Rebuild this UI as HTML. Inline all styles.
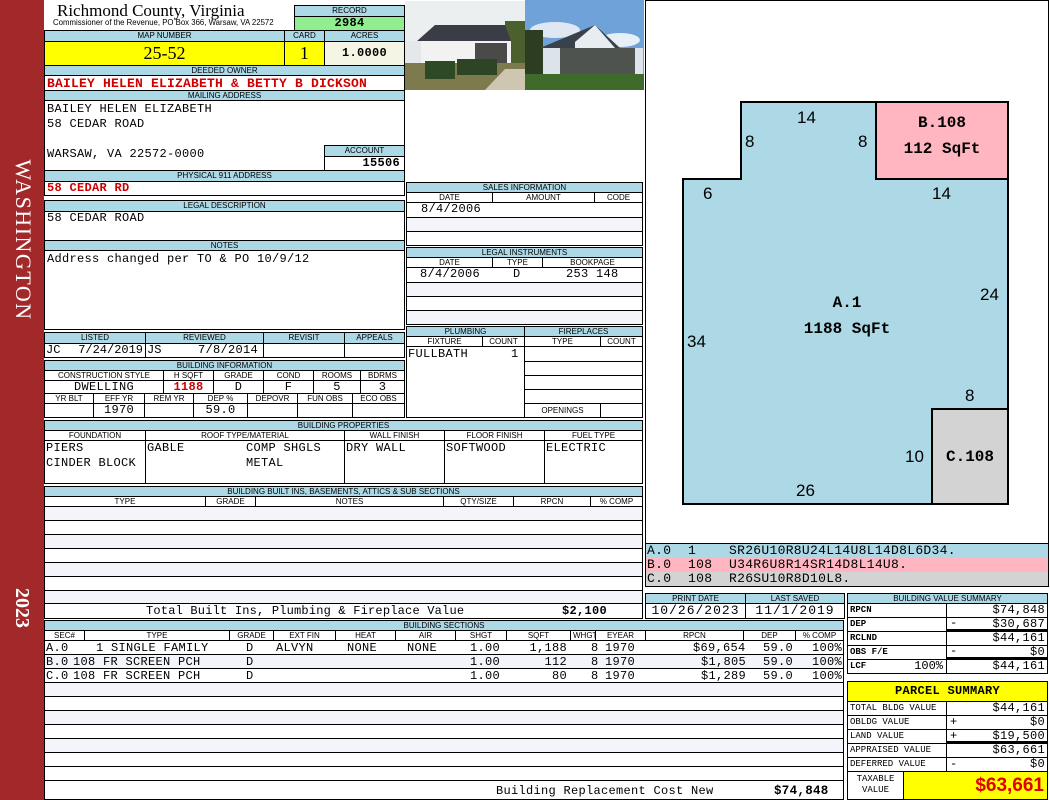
<!DOCTYPE html>
<html><head><meta charset="utf-8"><style>
*{margin:0;padding:0;box-sizing:border-box}
body{width:1050px;height:800px;position:relative;background:#fff;overflow:hidden;font-family:"Liberation Mono",monospace;font-size:12px;letter-spacing:0.3px;color:#000}
div{position:absolute}
.h{background:#add8e6;border:1px solid #000;font-family:"Liberation Sans",sans-serif;font-size:8px;letter-spacing:0;text-align:center;line-height:9px;white-space:nowrap;overflow:hidden}
.c{border:1px solid #000;background:#fff;white-space:nowrap;overflow:hidden;line-height:13px;padding:0 2px}
.t{font-family:"Liberation Sans",sans-serif;font-size:8px;letter-spacing:0;line-height:9px;text-align:center}
.s{background:#f4f5fa}
.r{text-align:right}.m{text-align:center}
.red{color:#d00000;font-weight:bold}
.sm{font-size:9px;letter-spacing:0}
.row span{position:absolute;top:0;line-height:14px;white-space:pre}
</style></head><body>
<div style="left:0;top:0;width:44px;height:800px;background:#a3282a"></div>
<div style="left:-64px;top:229px;width:174px;height:22px;color:#fff;font-family:'Liberation Serif',serif;font-size:22px;letter-spacing:1.5px;line-height:22px;transform:rotate(90deg);text-align:center">WASHINGTON</div>
<div style="left:1px;top:597px;width:42px;height:22px;color:#fff;font-family:'Liberation Serif',serif;font-weight:bold;font-size:20px;letter-spacing:0;line-height:22px;transform:rotate(90deg);text-align:center">2023</div>

<div style="left:57px;top:2px;font-family:'Liberation Serif',serif;font-size:17px;letter-spacing:0;line-height:18px">Richmond County, Virginia</div>
<div style="left:53px;top:19px;font-family:'Liberation Sans',sans-serif;font-size:7.8px;letter-spacing:0;line-height:8px">Commissioner of the Revenue, PO Box 366, Warsaw, VA 22572</div>
<div class="h" style="left:294px;top:5px;width:111px;height:12px;line-height:10px">RECORD</div>
<div class="c m" style="left:294px;top:16px;width:111px;height:15px;background:#90ee90;font-weight:bold;line-height:13px">2984</div>

<div class="h" style="left:44px;top:30px;width:241px;height:12px;line-height:10px">MAP NUMBER</div>
<div class="h" style="left:284px;top:30px;width:41px;height:12px;line-height:10px">CARD</div>
<div class="h" style="left:324px;top:30px;width:81px;height:12px;line-height:10px">ACRES</div>
<div class="c m" style="left:44px;top:41px;width:241px;height:25px;background:#ffff00;font-family:'Liberation Serif',serif;font-size:18px;letter-spacing:0;line-height:23px">25-52</div>
<div class="c m" style="left:284px;top:41px;width:41px;height:25px;background:#ffff00;font-family:'Liberation Serif',serif;font-size:18px;line-height:23px">1</div>
<div class="c m" style="left:324px;top:41px;width:81px;height:25px;background:#f5f5e6;font-weight:bold;font-size:12px;line-height:23px">1.0000</div>

<div class="h" style="left:44px;top:65px;width:361px;height:11px">DEEDED OWNER</div>
<div class="c red" style="left:44px;top:75px;width:361px;height:16px;font-size:13px;letter-spacing:0.2px;line-height:15px">BAILEY HELEN ELIZABETH &amp; BETTY B DICKSON</div>
<div class="h" style="left:44px;top:90px;width:361px;height:11px">MAILING ADDRESS</div>
<div class="c" style="left:44px;top:100px;width:361px;height:71px;line-height:15px;padding-top:1px">BAILEY HELEN ELIZABETH<br>58 CEDAR ROAD<br><br>WARSAW, VA 22572-0000</div>
<div class="h" style="left:324px;top:145px;width:81px;height:12px;line-height:10px">ACCOUNT</div>
<div class="c r" style="left:324px;top:156px;width:81px;height:15px;font-weight:bold;padding-right:4px">15506</div>
<div class="h" style="left:44px;top:170px;width:361px;height:12px;line-height:10px">PHYSICAL 911 ADDRESS</div>
<div class="c red" style="left:44px;top:181px;width:361px;height:15px">58 CEDAR RD</div>

<div class="h" style="left:44px;top:200px;width:361px;height:12px;line-height:10px">LEGAL DESCRIPTION</div>
<div class="c" style="left:44px;top:211px;width:361px;height:30px">58 CEDAR ROAD</div>
<div class="h" style="left:44px;top:240px;width:361px;height:11px">NOTES</div>
<div class="c" style="left:44px;top:250px;width:361px;height:80px;padding-top:2px">Address changed per TO &amp; PO 10/9/12</div>

<div class="h" style="left:44px;top:332px;width:102px;height:12px;line-height:10px">LISTED</div>
<div class="h" style="left:145px;top:332px;width:119px;height:12px;line-height:10px">REVIEWED</div>
<div class="h" style="left:263px;top:332px;width:82px;height:12px;line-height:10px">REVISIT</div>
<div class="h" style="left:344px;top:332px;width:61px;height:12px;line-height:10px">APPEALS</div>
<div class="c" style="left:44px;top:343px;width:102px;height:15px;padding:0 1px;letter-spacing:0">JC<span style="position:absolute;right:2px">7/24/2019</span></div>
<div class="c" style="left:145px;top:343px;width:119px;height:15px;padding:0 1px;letter-spacing:0">JS<span style="position:absolute;right:5px;letter-spacing:0.3px">7/8/2014</span></div>
<div class="c" style="left:263px;top:343px;width:82px;height:15px"></div>
<div class="c" style="left:344px;top:343px;width:61px;height:15px"></div>

<div class="h" style="left:44px;top:360px;width:361px;height:11px">BUILDING INFORMATION</div>
<div class="c t" style="left:44px;top:370px;width:120px;height:11px">CONSTRUCTION STYLE</div>
<div class="c t" style="left:163px;top:370px;width:51px;height:11px">H SQFT</div>
<div class="c t" style="left:213px;top:370px;width:51px;height:11px">GRADE</div>
<div class="c t" style="left:263px;top:370px;width:51px;height:11px">COND</div>
<div class="c t" style="left:313px;top:370px;width:48px;height:11px">ROOMS</div>
<div class="c t" style="left:360px;top:370px;width:45px;height:11px">BDRMS</div>
<div class="c m" style="left:44px;top:380px;width:120px;height:14px;line-height:12px">DWELLING</div>
<div class="c m red" style="left:163px;top:380px;width:51px;height:14px;line-height:12px">1188</div>
<div class="c m" style="left:213px;top:380px;width:51px;height:14px;line-height:12px">D</div>
<div class="c m" style="left:263px;top:380px;width:51px;height:14px;line-height:12px">F</div>
<div class="c m" style="left:313px;top:380px;width:48px;height:14px;line-height:12px">5</div>
<div class="c m" style="left:360px;top:380px;width:45px;height:14px;line-height:12px">3</div>
<div class="c t" style="left:44px;top:393px;width:50px;height:11px">YR BLT</div>
<div class="c t" style="left:93px;top:393px;width:52px;height:11px">EFF YR</div>
<div class="c t" style="left:144px;top:393px;width:50px;height:11px">REM YR</div>
<div class="c t" style="left:193px;top:393px;width:55px;height:11px">DEP %</div>
<div class="c t" style="left:247px;top:393px;width:51px;height:11px">DEPOVR</div>
<div class="c t" style="left:297px;top:393px;width:56px;height:11px">FUN OBS</div>
<div class="c t" style="left:352px;top:393px;width:53px;height:11px">ECO OBS</div>
<div class="c" style="left:44px;top:403px;width:50px;height:15px"></div>
<div class="c m" style="left:93px;top:403px;width:52px;height:15px">1970</div>
<div class="c" style="left:144px;top:403px;width:50px;height:15px"></div>
<div class="c m" style="left:193px;top:403px;width:55px;height:15px">59.0</div>
<div class="c" style="left:247px;top:403px;width:51px;height:15px"></div>
<div class="c" style="left:297px;top:403px;width:56px;height:15px"></div>
<div class="c" style="left:352px;top:403px;width:53px;height:15px"></div>

<!-- photos -->
<svg style="position:absolute;left:405px;top:1px" width="120" height="89" viewBox="0 0 120 89">
<rect width="120" height="89" fill="#e4e8ea"/><rect y="0" width="120" height="40" fill="#eceff0"/>
<rect x="100" y="20" width="20" height="45" fill="#4b5f2f"/>
<rect y="62" width="120" height="27" fill="#7d7a4e"/><polygon points="80,89 120,89 120,68 100,68" fill="#cfc6b2"/>
<polygon points="12,40 30,24 100,24 106,40" fill="#3a3d45"/>
<rect x="16" y="40" width="90" height="22" fill="#f2f2f2"/>
<rect x="70" y="42" width="32" height="20" fill="#4a4a48"/>
<rect x="20" y="60" width="30" height="18" fill="#2e4a25"/><rect x="52" y="58" width="40" height="16" fill="#2d4524"/>
</svg>
<svg style="position:absolute;left:525px;top:0" width="119" height="90" viewBox="0 0 119 90">
<rect width="119" height="90" fill="#6fa2d8"/><ellipse cx="30" cy="30" rx="25" ry="8" fill="#dfe8f2"/><ellipse cx="95" cy="40" rx="20" ry="7" fill="#e6eef6"/>
<rect x="0" y="30" width="18" height="50" fill="#2d3d22"/>
<polygon points="15,48 70,25 95,48" fill="#39424a"/>
<polygon points="50,42 70,25 90,48 50,48" fill="#e8edf2"/>
<rect x="18" y="48" width="100" height="30" fill="#dde3ea"/>
<rect x="35" y="48" width="75" height="28" fill="#4e5350"/>
<rect y="74" width="119" height="16" fill="#3e6a2a"/>
</svg>

<!-- sales -->
<div class="h" style="left:406px;top:182px;width:237px;height:11px">SALES INFORMATION</div>
<div class="c t" style="left:406px;top:192px;width:87px;height:11px">DATE</div>
<div class="c t" style="left:492px;top:192px;width:103px;height:11px">AMOUNT</div>
<div class="c t" style="left:594px;top:192px;width:49px;height:11px">CODE</div>
<div class="c" style="left:406px;top:202px;width:237px;height:16px;padding-left:14px">8/4/2006</div>
<div class="c s" style="left:406px;top:217px;width:237px;height:15px"></div>
<div class="c" style="left:406px;top:231px;width:237px;height:15px"></div>
<div class="h" style="left:406px;top:247px;width:237px;height:11px">LEGAL INSTRUMENTS</div>
<div class="c t" style="left:406px;top:257px;width:87px;height:11px">DATE</div>
<div class="c t" style="left:492px;top:257px;width:51px;height:11px">TYPE</div>
<div class="c t" style="left:542px;top:257px;width:101px;height:11px">BOOKPAGE</div>
<div class="c" style="left:406px;top:267px;width:237px;height:16px"></div>
<div style="left:420px;top:268px;line-height:13px">8/4/2006</div><div style="left:513px;top:268px;line-height:13px">D</div><div style="left:566px;top:268px;line-height:13px">253 148</div>
<div class="c s" style="left:406px;top:282px;width:237px;height:15px"></div>
<div class="c" style="left:406px;top:296px;width:237px;height:15px"></div>
<div class="c s" style="left:406px;top:310px;width:237px;height:15px"></div>

<!-- plumbing -->
<div class="h" style="left:406px;top:326px;width:119px;height:11px">PLUMBING</div>
<div class="h" style="left:524px;top:326px;width:119px;height:11px">FIREPLACES</div>
<div class="c t" style="left:406px;top:336px;width:77px;height:11px">FIXTURE</div>
<div class="c t" style="left:482px;top:336px;width:43px;height:11px">COUNT</div>
<div class="c t" style="left:524px;top:336px;width:77px;height:11px">TYPE</div>
<div class="c t" style="left:600px;top:336px;width:43px;height:11px">COUNT</div>
<div style="left:406px;top:346px;width:119px;height:72px;border:1px solid #000;border-top:none"></div>
<div style="left:408px;top:348px;line-height:13px">FULLBATH</div><div style="left:511px;top:348px;line-height:13px">1</div>
<div class="c" style="left:524px;top:346px;width:119px;height:16px"></div>
<div class="c" style="left:524px;top:361px;width:119px;height:15px"></div>
<div class="c" style="left:524px;top:375px;width:119px;height:15px"></div>
<div class="c" style="left:524px;top:389px;width:119px;height:15px"></div>
<div class="c t" style="left:524px;top:403px;width:77px;height:15px;line-height:13px">OPENINGS</div>
<div class="c" style="left:600px;top:403px;width:43px;height:15px"></div>

<!-- building properties -->
<div class="h" style="left:44px;top:420px;width:599px;height:11px">BUILDING PROPERTIES</div>
<div class="c t" style="left:44px;top:430px;width:102px;height:11px">FOUNDATION</div>
<div class="c t" style="left:145px;top:430px;width:200px;height:11px">ROOF TYPE/MATERIAL</div>
<div class="c t" style="left:344px;top:430px;width:101px;height:11px">WALL FINISH</div>
<div class="c t" style="left:444px;top:430px;width:101px;height:11px">FLOOR FINISH</div>
<div class="c t" style="left:544px;top:430px;width:99px;height:11px">FUEL TYPE</div>
<div class="c" style="left:44px;top:440px;width:102px;height:44px;line-height:15px;padding:0 1px">PIERS<br>CINDER BLOCK</div>
<div class="c" style="left:145px;top:440px;width:200px;height:44px;line-height:15px;padding:0 1px">GABLE</div>
<div style="left:246px;top:441px;line-height:15px">COMP SHGLS<br>METAL</div>
<div class="c" style="left:344px;top:440px;width:101px;height:44px;line-height:15px;padding:0 1px">DRY WALL</div>
<div class="c" style="left:444px;top:440px;width:101px;height:44px;line-height:15px;padding:0 1px">SOFTWOOD</div>
<div class="c" style="left:544px;top:440px;width:99px;height:44px;line-height:15px;padding:0 1px">ELECTRIC</div>

<!-- built ins -->
<div class="h" style="left:44px;top:486px;width:599px;height:11px">BUILDING BUILT INS, BASEMENTS, ATTICS &amp; SUB SECTIONS</div>
<div class="c t" style="left:44px;top:496px;width:162px;height:11px">TYPE</div>
<div class="c t" style="left:205px;top:496px;width:51px;height:11px">GRADE</div>
<div class="c t" style="left:255px;top:496px;width:189px;height:11px">NOTES</div>
<div class="c t" style="left:443px;top:496px;width:71px;height:11px">QTY/SIZE</div>
<div class="c t" style="left:513px;top:496px;width:78px;height:11px">RPCN</div>
<div class="c t" style="left:590px;top:496px;width:53px;height:11px">% COMP</div>
<div class="c s" style="left:44px;top:506px;width:599px;height:15px"></div>
<div class="c" style="left:44px;top:520px;width:599px;height:15px"></div>
<div class="c s" style="left:44px;top:534px;width:599px;height:15px"></div>
<div class="c" style="left:44px;top:548px;width:599px;height:15px"></div>
<div class="c s" style="left:44px;top:562px;width:599px;height:15px"></div>
<div class="c" style="left:44px;top:576px;width:599px;height:15px"></div>
<div class="c s" style="left:44px;top:590px;width:599px;height:14px"></div>
<div class="c" style="left:44px;top:603px;width:599px;height:16px"></div>
<div style="left:146px;top:604px;line-height:14px;font-size:12px;letter-spacing:0.2px">Total Built Ins, Plumbing &amp; Fireplace Value</div>
<div style="left:562px;top:604px;line-height:14px;font-size:12px;font-weight:bold">$2,100</div>

<!-- building sections -->
<div class="h" style="left:44px;top:620px;width:800px;height:11px">BUILDING SECTIONS</div>
<div class="c t" style="left:44px;top:630px;width:41px;height:11px">SEC#</div>
<div class="c t" style="left:84px;top:630px;width:146px;height:11px">TYPE</div>
<div class="c t" style="left:229px;top:630px;width:45px;height:11px">GRADE</div>
<div class="c t" style="left:273px;top:630px;width:63px;height:11px">EXT FIN</div>
<div class="c t" style="left:335px;top:630px;width:61px;height:11px">HEAT</div>
<div class="c t" style="left:395px;top:630px;width:61px;height:11px">AIR</div>
<div class="c t" style="left:455px;top:630px;width:52px;height:11px">SHGT</div>
<div class="c t" style="left:506px;top:630px;width:65px;height:11px">SQFT</div>
<div class="c t" style="left:570px;top:630px;width:26px;height:11px">WHGT</div>
<div class="c t" style="left:595px;top:630px;width:51px;height:11px">EYEAR</div>
<div class="c t" style="left:645px;top:630px;width:99px;height:11px">RPCN</div>
<div class="c t" style="left:743px;top:630px;width:53px;height:11px">DEP</div>
<div class="c t" style="left:795px;top:630px;width:49px;height:11px">% COMP</div>
<div class="c" style="left:44px;top:640px;width:800px;height:15px"></div>
<div class="c s" style="left:44px;top:654px;width:800px;height:15px"></div>
<div class="c" style="left:44px;top:668px;width:800px;height:15px"></div>
<div class="c s" style="left:44px;top:682px;width:800px;height:15px"></div>
<div class="c" style="left:44px;top:696px;width:800px;height:15px"></div>
<div class="c s" style="left:44px;top:710px;width:800px;height:15px"></div>
<div class="c" style="left:44px;top:724px;width:800px;height:15px"></div>
<div class="c s" style="left:44px;top:738px;width:800px;height:15px"></div>
<div class="c" style="left:44px;top:752px;width:800px;height:15px"></div>
<div class="c" style="left:44px;top:766px;width:800px;height:15px"></div>
<div class="c" style="left:44px;top:780px;width:800px;height:20px"></div>
<div class="row" style="left:0;top:641px;width:850px;height:14px">
<span style="left:46px">A.0</span><span style="left:96px">1 SINGLE FAMILY</span><span style="left:246px">D</span><span style="left:276px">ALVYN</span><span style="left:347px">NONE</span><span style="left:407px">NONE</span>
<span style="right:350px">1.00</span><span style="right:283px">1,188</span><span style="left:591px">8</span><span style="left:605px">1970</span>
<span style="left:693px">$69,654</span><span style="left:763px">59.0</span><span style="left:812px">100%</span></div>
<div class="row" style="left:0;top:655px;width:850px;height:14px">
<span style="left:46px">B.0</span><span style="left:73px">108 FR SCREEN PCH</span><span style="left:246px">D</span>
<span style="right:350px">1.00</span><span style="right:283px">112</span><span style="left:591px">8</span><span style="left:605px">1970</span>
<span style="left:701px">$1,805</span><span style="left:763px">59.0</span><span style="left:812px">100%</span></div>
<div class="row" style="left:0;top:669px;width:850px;height:14px">
<span style="left:46px">C.0</span><span style="left:73px">108 FR SCREEN PCH</span><span style="left:246px">D</span>
<span style="right:350px">1.00</span><span style="right:283px">80</span><span style="left:591px">8</span><span style="left:605px">1970</span>
<span style="left:701px">$1,289</span><span style="left:763px">59.0</span><span style="left:812px">100%</span></div>
<div style="left:496px;top:784px;line-height:14px">Building Replacement Cost New</div>
<div style="left:774px;top:784px;line-height:14px;font-weight:bold;font-size:12.5px">$74,848</div>

<!-- sketch -->
<div style="left:645px;top:0;width:404px;height:544px;border:1px solid #000"></div>
<svg style="position:absolute;left:645px;top:0" width="404" height="544" viewBox="645 0 404 544">
<polygon points="683,179 741,179 741,102 876,102 876,179 1008,179 1008,409 932,409 932,504 683,504" fill="#add8e6" stroke="#000" stroke-width="2"/>
<rect x="876" y="102" width="132" height="77" fill="#ffb6c1" stroke="#000" stroke-width="2"/>
<rect x="932" y="409" width="76" height="95" fill="#d3d3d3" stroke="#000" stroke-width="2"/>
<g font-family="Liberation Sans, sans-serif" font-size="17" letter-spacing="0">
<text x="797" y="123">14</text><text x="745" y="147">8</text><text x="858" y="147">8</text><text x="703" y="199">6</text><text x="932" y="199">14</text>
<text x="980" y="300">24</text><text x="687" y="347">34</text><text x="965" y="401">8</text><text x="905" y="462">10</text><text x="796" y="496">26</text>
</g>
<g font-family="Liberation Mono, monospace" font-size="16" font-weight="bold" text-anchor="middle" letter-spacing="0">
<text x="942" y="127">B.108</text><text x="942" y="153">112 SqFt</text>
<text x="847" y="307">A.1</text><text x="847" y="333">1188 SqFt</text>
<text x="970" y="461">C.108</text>
</g>
</svg>
<div style="left:645px;top:543px;width:404px;height:44px;border:1px solid #000"></div>
<div style="left:646px;top:544px;width:402px;height:14px;background:#add8e6;font-size:13px;letter-spacing:0.3px;line-height:14px"><span style="position:absolute;left:1px">A.0</span><span style="position:absolute;left:42px">1</span><span style="position:absolute;left:83px">SR26U10R8U24L14U8L14D8L6D34.</span></div>
<div style="left:646px;top:558px;width:402px;height:14px;background:#ffb6c1;font-size:13px;letter-spacing:0.3px;line-height:14px"><span style="position:absolute;left:1px">B.0</span><span style="position:absolute;left:42px">108</span><span style="position:absolute;left:83px">U34R6U8R14SR14D8L14U8.</span></div>
<div style="left:646px;top:572px;width:402px;height:14px;background:#d3d3d3;font-size:13px;letter-spacing:0.3px;line-height:14px"><span style="position:absolute;left:1px">C.0</span><span style="position:absolute;left:42px">108</span><span style="position:absolute;left:83px">R26SU10R8D10L8.</span></div>

<div class="h" style="left:645px;top:593px;width:101px;height:11px">PRINT DATE</div>
<div class="h" style="left:745px;top:593px;width:100px;height:11px">LAST SAVED</div>
<div class="c m" style="left:645px;top:603px;width:101px;height:16px;font-size:13px;letter-spacing:1px">10/26/2023</div>
<div class="c m" style="left:745px;top:603px;width:100px;height:16px;font-size:13px;letter-spacing:1px">11/1/2019</div>

<div class="h" style="left:847px;top:593px;width:201px;height:11px">BUILDING VALUE SUMMARY</div>
<div class="c sm" style="left:847px;top:603px;width:100px;height:15px;font-weight:bold">RPCN</div>
<div class="c r" style="left:946px;top:603px;width:102px;height:15px">$74,848</div>
<div class="c sm" style="left:847px;top:617px;width:100px;height:15px;font-weight:bold">DEP</div>
<div class="c r" style="left:946px;top:617px;width:102px;height:15px;border-bottom:3px solid #000;line-height:12px">$30,687</div>
<div style="left:950px;top:617px;line-height:13px">-</div>
<div class="c sm" style="left:847px;top:631px;width:100px;height:15px;font-weight:bold">RCLND</div>
<div class="c r" style="left:946px;top:631px;width:102px;height:15px">$44,161</div>
<div class="c sm" style="left:847px;top:645px;width:100px;height:15px;font-weight:bold">OBS F/E</div>
<div class="c r" style="left:946px;top:645px;width:102px;height:15px;border-bottom:3px solid #000;line-height:12px">$0</div>
<div style="left:950px;top:645px;line-height:13px">-</div>
<div class="c sm" style="left:847px;top:659px;width:100px;height:15px;font-weight:bold">LCF<span style="position:absolute;right:3px;font-size:12px;font-weight:normal">100%</span></div>
<div class="c r" style="left:946px;top:659px;width:102px;height:15px">$44,161</div>

<div class="c m" style="left:847px;top:681px;width:201px;height:21px;background:#ffff00;font-weight:bold;font-size:12px;line-height:19px">PARCEL SUMMARY</div>
<div class="c sm" style="left:847px;top:701px;width:100px;height:15px">TOTAL BLDG VALUE</div>
<div class="c r" style="left:946px;top:701px;width:102px;height:15px">$44,161</div>
<div class="c sm" style="left:847px;top:715px;width:100px;height:15px">OBLDG VALUE</div>
<div class="c r" style="left:946px;top:715px;width:102px;height:15px">$0</div>
<div style="left:950px;top:715px;line-height:14px">+</div>
<div class="c sm" style="left:847px;top:729px;width:100px;height:15px">LAND VALUE</div>
<div class="c r" style="left:946px;top:729px;width:102px;height:15px;border-bottom:3px solid #000;line-height:12px">$19,500</div>
<div style="left:950px;top:729px;line-height:14px">+</div>
<div class="c sm" style="left:847px;top:743px;width:100px;height:15px">APPRAISED VALUE</div>
<div class="c r" style="left:946px;top:743px;width:102px;height:15px">$63,661</div>
<div class="c sm" style="left:847px;top:757px;width:100px;height:15px">DEFERRED VALUE</div>
<div class="c r" style="left:946px;top:757px;width:102px;height:15px">$0</div>
<div style="left:950px;top:757px;line-height:14px">-</div>
<div class="c m sm" style="left:847px;top:771px;width:57px;height:29px;line-height:11px;padding-top:2px">TAXABLE<br>VALUE</div>
<div class="c r" style="left:903px;top:771px;width:145px;height:29px;background:#ffff00;color:#e00000;font-family:'Liberation Sans',sans-serif;font-weight:bold;font-size:19px;letter-spacing:0;line-height:27px;padding-right:3px">$63,661</div>
</body></html>
